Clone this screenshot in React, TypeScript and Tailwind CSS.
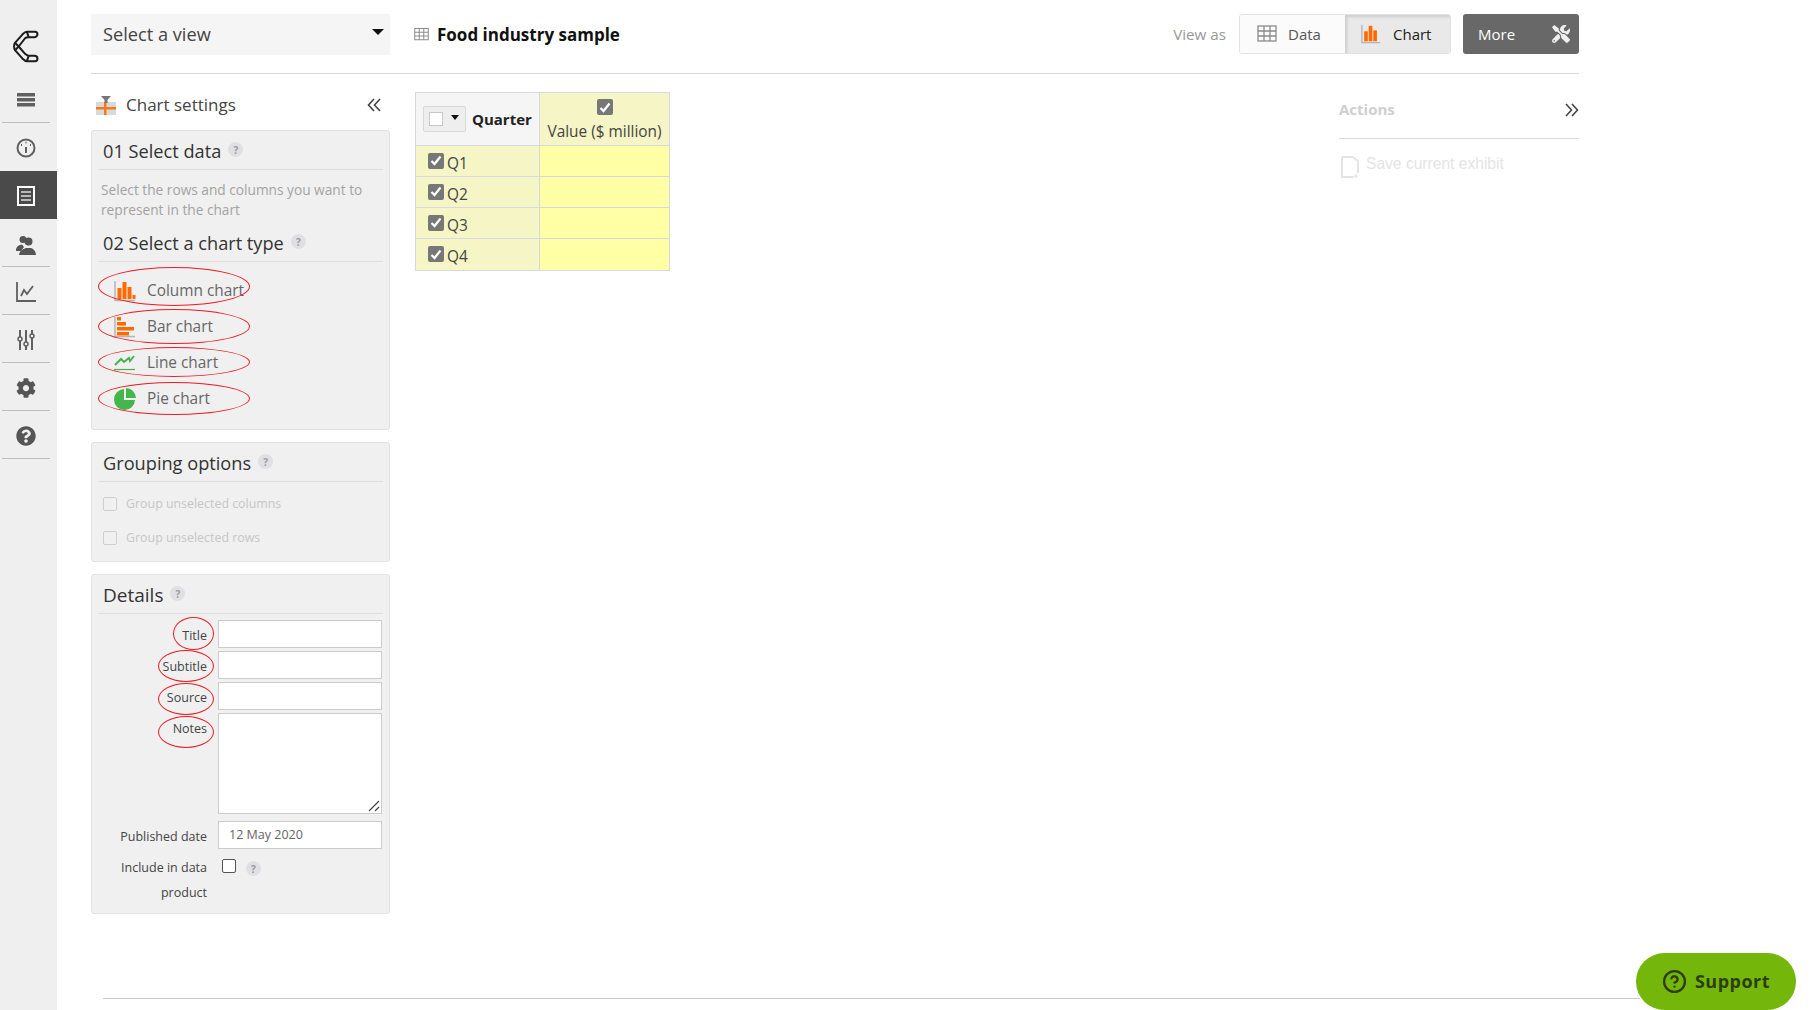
import { FaCog, FaQuestionCircle, FaTools } from "react-icons/fa";
import { FiHelpCircle } from "react-icons/fi";

function Help({ className = "" }: { className?: string }) {
  return (
    <span className={`inline-flex h-[15px] w-[15px] items-center justify-center rounded-full bg-[#e0e0e4] text-[10px] font-bold leading-none text-[#9a9a9a] ${className}`}>
      ?
    </span>
  );
}

function SideItem({ children, active, tall }: { children: React.ReactNode; active?: boolean; tall?: boolean }) {
  return (
    <div className={`flex items-center justify-center pr-[6px] pt-[2px] ${active ? "h-[48px] bg-[#4a4a4a] text-white" : tall ? "h-[48px] text-[#555555]" : "h-[47px] text-[#555555]"}`}>
      {children}
    </div>
  );
}

function SideRule() {
  return <div className="ml-[2px] h-px w-[48px] bg-[#bdbdbd]" />;
}

function Logo() {
  return (
    <svg width="26" height="33" viewBox="0 0 28 36" fill="none" stroke="#1c1c1c" strokeWidth="2.200" strokeLinejoin="round">
      <path d="M24 2 H15 C13 2 12 3 10 5 L2 14 C1 15 1 16 1 18 C1 20 1 21 2 22 L10 31 C12 33 13 34 15 34 H24 C26 34 26.500 32 26.500 31 C26.500 29 25 28 23 28 H17 C15 28 14 27 13 26 L6 18 L13 9 C14 8 15 8 17 8 H23 C25 8 26.500 6 26.500 5 C26.500 3 26 2 24 2 Z" />
      <path d="M2 14 L6 18 L2 22 M15 2 L17 8 M15 34 L17 28" />
    </svg>
  );
}

function ColumnIcon({ small }: { small?: boolean }) {
  return (
    <svg width={small ? 20 : 22} height="22" viewBox="0 0 22 22">
      <path d="M1 1 V20.500 H21" fill="none" stroke="#b5b5b5" strokeWidth="1.500" />
      <rect x="3.500" y="8" width="4" height="11" fill="#ff6a00" />
      <rect x="8.500" y="2" width="4" height="17" fill="#ff6a00" />
      <rect x="13.500" y="7" width="4" height="12" fill="#ff6a00" />
      {!small && <rect x="18.500" y="15" width="3" height="4" fill="#ff6a00" />}
    </svg>
  );
}

function BarIcon() {
  return (
    <svg width="22" height="22" viewBox="0 0 22 22">
      <path d="M1 1 V20.500 H21" fill="none" stroke="#b5b5b5" strokeWidth="1.500" />
      <rect x="3" y="1" width="4" height="3.500" fill="#ff6a00" />
      <rect x="3" y="6" width="9" height="3.500" fill="#ff6a00" />
      <rect x="3" y="11" width="17" height="3.500" fill="#ff6a00" />
      <rect x="3" y="16" width="12" height="3.500" fill="#ff6a00" />
    </svg>
  );
}

function LineIcon() {
  return (
    <svg width="22" height="16" viewBox="0 0 22 16" fill="none" stroke="#4cb050" strokeWidth="2">
      <path d="M1 10 L7 4 L10 7 L15 3 L16 6 L20 1" />
      <path d="M0 14.500 H21" strokeWidth="1.200" />
    </svg>
  );
}

function PieIcon() {
  return (
    <svg width="22" height="22" viewBox="0 0 22 22">
      <path d="M10 1 A10.500 10.500 0 1 0 21 12 H10 Z" fill="#45b54e" />
      <path d="M12 0 A10.500 10.500 0 0 1 22 10 H12 Z" fill="#45b54e" />
    </svg>
  );
}

function GridIcon({ size, color }: { size: number; color: string }) {
  return (
    <svg width={size} height={size} viewBox="0 0 20 20" fill="none" stroke={color} strokeWidth="1.300">
      <rect x="1" y="2" width="18" height="15" />
      <path d="M1 7 H19 M1 12 H19 M7 2 V17 M13 2 V17" />
    </svg>
  );
}

function Tick({ className = "" }: { className?: string }) {
  return (
    <span className={`inline-flex h-[16px] w-[16px] items-center justify-center rounded-[2px] bg-[#777777] ${className}`}>
      <svg width="12" height="11" viewBox="0 0 12 11" fill="none" stroke="#ffffff" strokeWidth="2.200">
        <path d="M1.500 6 L4.500 9 L10.500 1.500" />
      </svg>
    </span>
  );
}

function Ellipse({ className }: { className: string }) {
  return <span className={`pointer-events-none absolute rounded-[50%] border border-[#f01b24] ${className}`} />;
}

function ChartRow({ label, icon, ring }: { label: string; icon: React.ReactNode; ring: string }) {
  return (
    <div className="relative flex h-[36px] items-center pl-[22px] text-[15.400px] text-[#666666]">
      <span className="flex w-[32px] items-center">{icon}</span>
      <span className="ml-[1px]">{label}</span>
      <Ellipse className={ring} />
    </div>
  );
}

function PanelHead({ children }: { children: React.ReactNode }) {
  return (
    <div className="mx-[6px] flex h-[39px] items-center gap-[7px] border-b border-[#dddddd] pl-[5px] pt-[3px] text-[18.200px] text-[#333333]">
      {children}
    </div>
  );
}

function FormRow({ label, ring, tall }: { label: string; ring?: string; tall?: boolean }) {
  return (
    <div className="flex gap-[11px]">
      <div className="relative w-[114px] pt-[7px] text-right text-[12.500px] leading-[18px] text-[#444444]">
        {label}
        {ring && <Ellipse className={ring} />}
      </div>
      <div className={`w-[164px] border border-[#cccccc] bg-white ${tall ? "relative h-[101px]" : "h-[28px]"}`}>
        {tall && (
          <svg className="absolute bottom-0 right-0" width="14" height="14" viewBox="0 0 14 14" stroke="#444444" strokeWidth="1.200">
            <path d="M2 12 L12 2 M8 12 L12 8" />
          </svg>
        )}
      </div>
    </div>
  );
}

export default function App() {
  return (
    <div className="relative flex h-[1010px] overflow-hidden bg-white font-['Open_Sans',sans-serif]">
      <aside className="w-[57px] shrink-0 bg-[#efefef]">
        <div className="flex h-[75px] items-start justify-center pt-[30px] pr-[6px]">
          <Logo />
        </div>
        <SideItem>
          <svg width="18" height="14" viewBox="0 0 18 14" fill="#606060">
            <rect width="18" height="3.500" />
            <rect y="5" width="18" height="3.500" />
            <rect y="10" width="18" height="3.500" />
          </svg>
        </SideItem>
        <SideRule />
        <SideItem tall>
          <svg width="20" height="20" viewBox="0 0 20 20" fill="none" stroke="#606060" strokeWidth="2">
            <circle cx="10" cy="10" r="8.500" />
            <path d="M10 9 V15" />
            <path d="M5 7 h1 M9.500 4.500 h1 M14 7 h1" />
          </svg>
        </SideItem>
        <SideItem active>
          <svg width="18" height="20" viewBox="0 0 18 20" fill="none" stroke="#ffffff" strokeWidth="2">
            <rect x="1" y="1" width="16" height="18" />
            <path d="M4 6 H14 M4 10 H14 M4 14 H14" stroke="#dddddd" strokeWidth="1.500" />
          </svg>
        </SideItem>
        <SideItem>
          <svg width="20" height="20" viewBox="0 0 20 20" fill="#555555" className="mt-[2px]">
            <circle cx="7" cy="4.500" r="3.500" />
            <path d="M0 14 C1 11 3 10 6 9.500 L8 12 L5 16 H0 Z" />
            <circle cx="12.500" cy="6.500" r="4" />
            <path d="M3 20 C3.500 15.500 7 14 10 13 H15 C18 14 19.500 16 20 20 Z" />
          </svg>
        </SideItem>
        <SideRule />
        <SideItem>
          <svg width="20" height="20" viewBox="0 0 20 20" fill="none" stroke="#606060" strokeWidth="1.800">
            <path d="M1 0 V19 H20" />
            <path d="M5 14 L8 8 L11 12 L17 4" />
          </svg>
        </SideItem>
        <SideRule />
        <SideItem>
          <svg width="18" height="20" viewBox="0 0 18 20" fill="none" stroke="#606060" strokeWidth="2">
            <path d="M3 0 V20 M9 0 V20 M15 0 V20" />
            <circle cx="3" cy="9" r="2" fill="#efefef" strokeWidth="1.500" />
            <circle cx="9" cy="14" r="2" fill="#efefef" strokeWidth="1.500" />
            <circle cx="15" cy="6" r="2" fill="#efefef" strokeWidth="1.500" />
          </svg>
        </SideItem>
        <SideRule />
        <SideItem>
          <FaCog size={20} />
        </SideItem>
        <SideRule />
        <SideItem>
          <FaQuestionCircle size={20} />
        </SideItem>
        <SideRule />
      </aside>

      <main className="w-[1522px] shrink-0 pl-[34px]">
        <header className="flex h-[74px] w-[1488px] items-start border-b border-[#d9d9d9] pt-[14px]">
          <div className="relative flex h-[41px] w-[299px] items-center bg-[#f5f5f5] pl-[12px] text-[18.200px] text-[#444444]">
            Select a view
            <span className="absolute right-[6px] top-[15px] h-0 w-0 border-x-[6px] border-t-[6px] border-x-transparent border-t-[#111111]" />
          </div>
          <div className="ml-[24px] flex h-[41px] items-center gap-[8px]">
            <span className="flex"><GridIcon size={15} color="#8a8a8a" /></span>
            <span className="text-[17px] font-bold text-[#111111]">Food industry sample</span>
          </div>
          <div className="ml-auto flex h-[40px] items-center">
            <span className="mr-[13px] text-[15.200px] text-[#999999]">View as</span>
            <div className="flex h-[40px] w-[212px] overflow-hidden rounded-[3px] border border-[#e2e2e2]">
              <div className="flex w-[105px] items-center gap-[11px] bg-[#fbfbfb] pl-[17px] text-[15px] text-[#555555]">
                <GridIcon size={20} color="#8a8a8a" />
                Data
              </div>
              <div className="flex flex-1 items-center gap-[12px] bg-[#e9e9e9] pl-[16px] text-[15px] text-[#222222] shadow-[inset_2px_2px_3px_rgba(0,0,0,0.12)]">
                <ColumnIcon small />
                Chart
              </div>
            </div>
            <div className="ml-[12px] flex h-[40px] w-[116px] items-center justify-between rounded-[3px] bg-[#686868] px-[15px] pr-[9px] text-[15px] text-white">
              More
              <FaTools size={18} className="text-[#f0f0f0]" />
            </div>
          </div>
        </header>

        <div className="flex w-[1488px] items-start">
          <section className="w-[299px] shrink-0">
            <div className="flex h-[56px] items-center pt-[6px] pl-[5px] text-[17px] text-[#444444]">
              <svg width="20" height="20" viewBox="0 0 20 20" className="mr-[10px]">
                <rect x="0" y="7" width="20" height="13" fill="#d9d9d9" />
                <rect x="0" y="12" width="20" height="2.500" fill="#f47a20" />
                <rect x="8" y="7" width="2.500" height="13" fill="#f47a20" />
                <path d="M5 1 H15 L11.500 5 V8 H8.500 V5 Z" fill="#777777" />
              </svg>
              Chart settings
              <svg className="ml-auto mr-[9px]" width="14" height="14" viewBox="0 0 14 14" fill="none" stroke="#444444" strokeWidth="1.600">
                <path d="M7 1 L1.500 7 L7 13 M13 1 L7.500 7 L13 13" />
              </svg>
            </div>

            <div className="h-[300px] rounded-[3px] border border-[#e3e3e3] bg-[#f0f0f0]">
              <PanelHead>
                01 Select data
                <Help className="-mt-[4px]" />
              </PanelHead>
              <p className="mt-[10px] px-[9px] text-[13.700px] leading-[20px] text-[#a3a3a3]">
                Select the rows and columns you want to represent in the chart
              </p>
              <div className="mt-[3px]">
                <PanelHead>
                  02 Select a chart type
                  <Help className="-mt-[4px]" />
                </PanelHead>
              </div>
              <div className="mt-[11px]">
                <ChartRow label="Column chart" icon={<ColumnIcon />} ring="left-[6px] top-[-6px] h-[39px] w-[152px]" />
                <ChartRow label="Bar chart" icon={<BarIcon />} ring="left-[6px] top-[0px] h-[35px] w-[152px]" />
                <ChartRow label="Line chart" icon={<LineIcon />} ring="left-[6px] top-[2px] h-[30px] w-[152px]" />
                <ChartRow label="Pie chart" icon={<PieIcon />} ring="left-[6px] top-[1px] h-[33px] w-[152px]" />
              </div>
            </div>

            <div className="mt-[12px] h-[120px] rounded-[3px] border border-[#e3e3e3] bg-[#f0f0f0]">
              <PanelHead>
                Grouping options
                <Help className="-mt-[4px]" />
              </PanelHead>
              <div className="mt-[13px] flex items-center gap-[9px] pl-[11px] text-[12.400px] text-[#c6c6c6]">
                <span className="h-[14px] w-[14px] rounded-[2px] border border-[#cfcfcf]" />
                Group unselected columns
              </div>
              <div className="mt-[15px] flex items-center gap-[9px] pl-[11px] text-[12.400px] text-[#c6c6c6]">
                <span className="h-[14px] w-[14px] rounded-[2px] border border-[#cfcfcf]" />
                Group unselected rows
              </div>
            </div>

            <div className="mt-[12px] h-[340px] rounded-[3px] border border-[#e3e3e3] bg-[#f0f0f0]">
              <PanelHead>
                <span className="text-[19px]">Details</span>
                <Help className="-mt-[4px]" />
              </PanelHead>
              <div className="mt-[6px] flex flex-col gap-[3px] pl-[1px]">
                <FormRow label="Title" ring="right-[-7px] top-[-3px] h-[33px] w-[41px]" />
                <FormRow label="Subtitle" ring="right-[-7px] top-[-1px] h-[32px] w-[56px]" />
                <FormRow label="Source" ring="right-[-7px] top-[1px] h-[32px] w-[56px]" />
                <FormRow label="Notes" ring="right-[-7px] top-[3px] h-[32px] w-[56px]" tall />
              </div>
              <div className="mt-[7px] flex gap-[11px] pl-[1px]">
                <div className="w-[114px] pt-[7px] text-right text-[12.500px] leading-[18px] text-[#444444]">Published date</div>
                <div className="flex h-[28px] w-[164px] items-center border border-[#cccccc] bg-white pl-[10px] text-[12.500px] text-[#666666]">
                  12 May 2020
                </div>
              </div>
              <div className="mt-[6px] flex gap-[11px] pl-[1px]">
                <div className="w-[114px] text-right text-[12.500px] leading-[25px] text-[#444444]">Include in data product</div>
                <div className="flex items-start pl-[4px] pt-[4px]">
                  <span className="h-[14px] w-[14px] rounded-[2px] border border-[#555555] bg-white" />
                  <Help className="ml-[10px] mt-[2px]" />
                </div>
              </div>
            </div>
          </section>

          <section className="ml-[25px] mt-[18px] w-[255px] shrink-0">
            <div className="border border-[#d7d9e2] text-[15.400px] text-[#444444]">
              <div className="flex h-[53px] border-b border-[#d7d9e2]">
                <div className="flex w-[123px] items-center bg-[#f5f5f5] pl-[7px]">
                  <span className="flex h-[26px] w-[43px] items-center gap-[8px] rounded-[2px] border border-[#d8d8d8] bg-[#eeeeee] pl-[5px]">
                    <span className="h-[14px] w-[14px] border border-[#c8c8c8] bg-white" />
                    <span className="-mt-[4px] h-0 w-0 border-x-[4px] border-t-[5px] border-x-transparent border-t-[#111111]" />
                  </span>
                  <span className="ml-[6px] text-[15px] font-bold text-[#222222]">Quarter</span>
                </div>
                <div className="flex flex-1 flex-col items-center border-l border-[#d7d9e2] bg-[#f5f5c6] pt-[6px]">
                  <Tick />
                  <span className="mt-[7px] leading-[20px]">Value ($ million)</span>
                </div>
              </div>
              {["Q1", "Q2", "Q3", "Q4"].map((q, i) => (
                <div key={q} className={`flex h-[31px] ${i < 3 ? "border-b border-[#d7d9e2]" : ""}`}>
                  <div className="flex w-[123px] items-center gap-[3px] bg-[#f5f5c6] pl-[12px]">
                    <Tick className="-mt-[1px]" />
                    <span className="mt-[5px] leading-none">{q}</span>
                  </div>
                  <div className="flex-1 border-l border-[#d7d9e2] bg-[#ffffa6]" />
                </div>
              ))}
            </div>
          </section>

          <section className="ml-auto w-[240px] shrink-0 pt-[17px]">
            <div className="flex h-[48px] items-center justify-between border-b border-[#dddddd] pb-[10px]">
              <span className="text-[15px] font-bold text-[#cfcfcf]">Actions</span>
              <svg width="14" height="14" viewBox="0 0 14 14" fill="none" stroke="#444444" strokeWidth="1.600">
                <path d="M1 1 L6.500 7 L1 13 M7 1 L12.500 7 L7 13" />
              </svg>
            </div>
            <div className="mt-[16px] flex items-center gap-[7px] pl-[2px] font-['Liberation_Sans',sans-serif] text-[15.600px] text-[#e4e4e4]">
              <svg width="18" height="24" viewBox="0 0 18 24" fill="none" stroke="#e4e4e4" strokeWidth="2">
                <path d="M1 2 H12 L17 6 V18 M13 22 H1 V2" />
                <path d="M15 19 V23 M13 21 H17" strokeWidth="1.200" />
              </svg>
              <span className="-mt-[6px]">Save current exhibit</span>
            </div>
          </section>
        </div>

        <div className="ml-[12px] mt-[84px] h-px w-[1537px] bg-[#cccccc]" />
      </main>

      <div className="absolute bottom-0 left-[1636px] flex h-[57px] w-[160px] items-center justify-center gap-[8px] rounded-[29px] bg-[#74b70a] text-[18px] font-bold tracking-[0.5px] text-[#2c3d05]">
        <FiHelpCircle size={25} strokeWidth={2.200} />
        Support
      </div>
    </div>
  );
}
